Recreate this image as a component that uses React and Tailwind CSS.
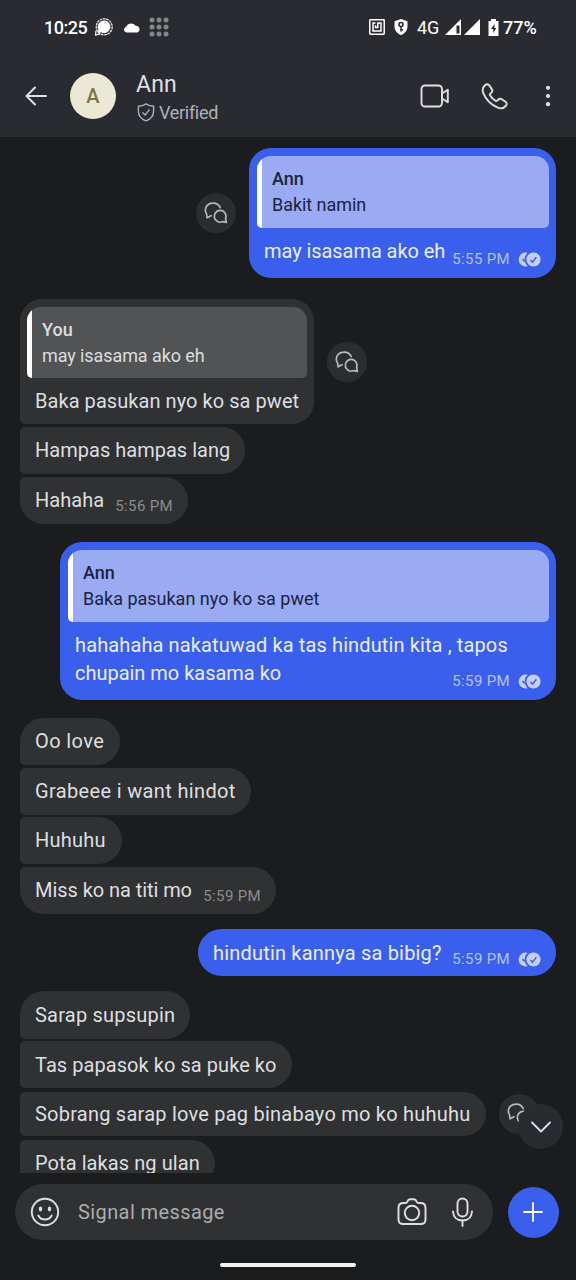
import React from 'react';
import clsx from 'clsx';

const messages = [
    {
        out: true,
        gap: 'mt-[11px]',
        box: 'w-[307px] h-[130px] rounded-[22px]',
        quote: { name: 'Ann', text: 'Bakit namin', track: 'tracking-[-0.05px]' },
        lines: [{ text: 'may isasama ako eh', track: 'tracking-[-0.06px]' }],
        time: '5:55 PM',
        thread: true,
    },
    {
        gap: 'mt-[21px]',
        box: 'w-[294px] h-[125px] rounded-[22px] rounded-bl-[5px]',
        quote: { name: 'You', text: 'may isasama ako eh', track: 'tracking-[-0.09px]' },
        lines: [{ text: 'Baka pasukan nyo ko sa pwet', track: 'tracking-[0.06px]' }],
        thread: true,
    },
    {
        gap: 'mt-[3px]',
        box: 'w-[225px] h-[47px] rounded-l-[5px] rounded-r-[24px]',
        lines: [{ text: 'Hampas hampas lang', track: 'tracking-[0.02px]' }],
    },
    {
        gap: 'mt-[3px]',
        box: 'w-[168px] h-[47px] rounded-[24px] rounded-tl-[5px]',
        lines: [{ text: 'Hahaha', track: 'tracking-[0.05px]' }],
        time: '5:56 PM',
    },
    {
        out: true,
        gap: 'mt-[18px]',
        box: 'w-[496px] h-[158px] rounded-[22px]',
        quote: { name: 'Ann', text: 'Baka pasukan nyo ko sa pwet', track: 'tracking-normal' },
        lines: [
            { text: 'hahahaha nakatuwad ka tas hindutin kita , tapos', track: 'tracking-[0.12px]' },
            { text: 'chupain mo kasama ko', track: 'tracking-[-0.02px]' },
        ],
        time: '5:59 PM',
    },
    {
        gap: 'mt-[18px]',
        box: 'w-[100px] h-[47px] rounded-[24px] rounded-bl-[5px]',
        lines: [{ text: 'Oo love', track: 'tracking-[0.4px]' }],
    },
    {
        gap: 'mt-[3px]',
        box: 'w-[231px] h-[47px] rounded-l-[5px] rounded-r-[24px]',
        lines: [{ text: 'Grabeee i want hindot', track: 'tracking-[0.35px]' }],
    },
    {
        gap: 'mt-[2px]',
        box: 'w-[102px] h-[47px] rounded-l-[5px] rounded-r-[24px]',
        lines: [{ text: 'Huhuhu', track: 'tracking-[0.25px]' }],
    },
    {
        gap: 'mt-[3px]',
        box: 'w-[256px] h-[47px] rounded-[24px] rounded-tl-[5px]',
        lines: [{ text: 'Miss ko na titi mo', track: 'tracking-[-0.06px]' }],
        time: '5:59 PM',
    },
    {
        out: true,
        gap: 'mt-[15px]',
        box: 'w-[358px] h-[47px] rounded-[24px]',
        lines: [{ text: 'hindutin kannya sa bibig?', track: 'tracking-[0.19px]' }],
        time: '5:59 PM',
    },
    {
        gap: 'mt-[15px]',
        box: 'w-[170px] h-[48px] rounded-[24px] rounded-bl-[5px]',
        lines: [{ text: 'Sarap supsupin', track: 'tracking-[0.22px]' }],
        pad: 'pt-[10px]',
    },
    {
        gap: 'mt-[2px]',
        box: 'w-[272px] h-[47px] rounded-l-[5px] rounded-r-[24px]',
        lines: [{ text: 'Tas papasok ko sa puke ko', track: 'tracking-[0.06px]' }],
        pad: 'pt-[10px]',
    },
    {
        gap: 'mt-[4px]',
        box: 'w-[466px] h-[44px] rounded-l-[5px] rounded-r-[22px]',
        lines: [{ text: 'Sobrang sarap love pag binabayo mo ko huhuhu', track: 'tracking-[0.23px]' }],
        thread: true,
        pad: 'pt-[8px]',
    },
    {
        gap: 'mt-[4px]',
        box: 'w-[195px] h-[47px] rounded-l-[5px] rounded-r-[24px]',
        lines: [{ text: 'Pota lakas ng ulan', track: 'tracking-[0.08px]' }],
    },
];

const ThreadButton = () => (
    <div className="flex h-10 w-10 shrink-0 items-center justify-center rounded-full bg-[#2c2d2f]">
        <svg className="h-[22px] w-6" viewBox="0 0 24 22" fill="none" stroke="#b9babd" strokeWidth="1.7" strokeLinecap="round" strokeLinejoin="round">
            <path d="M16.200 5.500A7.700 7.700 0 0 0 8.800 1.200C4.600 1.200 1.300 4.300 1.300 8.200c0 1.500.5 2.700 1.300 3.800l.5 3.800L7 13.700" />
            <path d="M21.600 16.600l.7 3.700-3.500-.7a5.900 5.900 0 1 1 2.800-3z" />
        </svg>
    </div>
);

const ReadChecks = () => (
    <svg className="h-[15px] w-[23px]" viewBox="0 0 23 15">
        <path d="M9.600.8a7 7 0 1 0 0 13.400 9 9 0 0 1 0-13.400z" fill="#c3cefa" />
        <path d="M4.500 7l2 2.500" stroke="#3b5fed" strokeWidth="1.500" />
        <circle cx="15.500" cy="7.500" r="7.100" fill="#c3cefa" />
        <path d="M12.400 7.900l2.100 2.300 3.900-5" fill="none" stroke="#3b5fed" strokeWidth="1.500" />
    </svg>
);

const Quote = ({ quote, out }) => (
    <div
        className={clsx(
            'mt-2 mr-[7px] flex shrink-0 overflow-hidden rounded-t-[14px] rounded-b-[5px] text-[18px]',
            out ? 'ml-2 h-[72px] bg-[#9aabf3] text-[#1b2340]' : 'ml-[7px] h-[71px] bg-[#525355] text-[#dcdddf]'
        )}
    >
        <div className="w-[5px] bg-white" />
        <div className="pt-[10px] pl-[10px]">
            <div className="leading-[26px] font-medium">{quote.name}</div>
            <div className={clsx('leading-[25px] whitespace-nowrap', quote.track)}>{quote.text}</div>
        </div>
    </div>
);

const Message = ({ msg }) => {
    const pad = msg.pad || (msg.out && !msg.quote ? 'pt-[10px]' : 'pt-[9px]');

    return (
        <div className={clsx('flex items-center gap-[13px]', msg.out && 'flex-row-reverse', msg.gap)}>
            <div
                className={clsx(
                    'relative flex shrink-0 flex-col overflow-hidden',
                    msg.out ? 'bg-[#3b5fed] text-[#e9edfd]' : 'bg-[#303133] text-[#dedfe1]',
                    msg.box
                )}
            >
                {msg.quote && <Quote quote={msg.quote} out={msg.out} />}
                <div className={clsx('pl-[15px] text-[20px] leading-[28px]', pad)}>
                    {msg.lines.map((line) => (
                        <div key={line.text} className={clsx('whitespace-nowrap', line.track)}>
                            {line.text}
                        </div>
                    ))}
                </div>
                {msg.time && (
                    <div
                        className={clsx(
                            'absolute right-[15px] flex items-center gap-2 text-[15px] leading-[18px] tracking-[0.35px]',
                            msg.quote && 'bottom-[10px]',
                            !msg.quote && (msg.out ? 'bottom-[8px]' : 'bottom-[9px]'),
                            msg.out ? 'text-[#b3c1f8]' : 'text-[#8b8c8f]'
                        )}
                    >
                        {msg.time}
                        {msg.out && <ReadChecks />}
                    </div>
                )}
            </div>
            {msg.thread && <ThreadButton />}
        </div>
    );
};

const StatusBar = () => (
    <div className="flex h-[54px] items-center pl-[44px] text-[18px] font-medium text-white">
        <span className="w-[51px] tracking-[-0.5px]">10:25</span>
        <svg className="h-[18px] w-[18px]" viewBox="0 0 18 18">
            <circle cx="9.200" cy="8.800" r="8" fill="none" stroke="#fff" strokeWidth="1.200" strokeDasharray="2.500 .8" />
            <path d="M9.200 2.600a6.200 6.200 0 1 1-3 11.600l-3.800 1.400 1-3.900a6.200 6.200 0 0 1 5.800-9.100z" fill="#fff" />
            <path d="M1 12.500L.6 17l4.500-.8" fill="none" stroke="#fff" strokeWidth="1.200" />
        </svg>
        <svg className="ml-[10px] h-[11px] w-[18px]" viewBox="0 0 18 11" fill="#fff">
            <path d="M3.400 10.500A3 3 0 0 1 3 4.700 5.500 5.500 0 0 1 12.600 3.800 3.500 3.500 0 0 1 14.400 10.500z" />
        </svg>
        <svg className="ml-[8px] h-[20px] w-[20px]" viewBox="0 0 20 20" fill="#85868a">
            {[3, 10, 17].map((y) => [3, 10, 17].map((x) => <circle key={`${x}-${y}`} cx={x} cy={y} r="2.500" />))}
        </svg>
        <svg className="ml-[200px] h-[16px] w-[16px]" viewBox="0 0 16 16" fill="none" stroke="#fff" strokeWidth="1.500">
            <rect x=".8" y=".8" width="14.400" height="14.400" rx=".6" />
            <path d="M6.500 4H4v8h8V4H8.800v4.500H6.500V6.200" />
        </svg>
        <svg className="ml-[9px] h-[16px] w-[14px]" viewBox="0 0 14 16">
            <path d="M7 0l6.500 2.300v5.200c0 3.800-2.700 7.200-6.500 8.500C3.200 14.700.5 11.300.5 7.500V2.300z" fill="#fff" />
            <circle cx="7" cy="5.600" r="2" fill="none" stroke="#2a2b30" strokeWidth="1.500" />
            <path d="M7 8v4.500M7 10.800h2" stroke="#2a2b30" strokeWidth="1.500" />
        </svg>
        <span className="ml-[9px] w-[28px] font-normal">4G</span>
        <svg className="h-[16px] w-[16px]" viewBox="0 0 16 16">
            <path d="M16 0v16H0z" fill="#fff" />
            <path d="M11.500 6.500h3v8h-3z" fill="#2a2b30" />
        </svg>
        <svg className="ml-[3px] h-[16px] w-[16px]" viewBox="0 0 16 16" fill="#fff">
            <path d="M16 0v16H0z" />
        </svg>
        <svg className="ml-[8px] h-[17px] w-[11px]" viewBox="0 0 11 17">
            <path d="M3 0h5v2h2.500v15H.5V2H3z" fill="#fff" />
            <path d="M6.500 5L3 10h2.300v4L8.300 9H6.500z" fill="#2a2b30" />
        </svg>
        <span className="ml-[4px]">77%</span>
    </div>
);

const Header = () => (
    <div className="flex h-[84px] items-center pl-[25px]">
        <svg className="h-[20px] w-[22px]" viewBox="0 0 22 20" fill="none" stroke="#dfe0e4" strokeWidth="2" strokeLinecap="round" strokeLinejoin="round">
            <path d="M21 10H1.500M10 1.500L1.500 10l8.500 8.500" />
        </svg>
        <div className="ml-[23px] flex h-[46px] w-[46px] items-center justify-center rounded-full bg-[#ebe8d6] text-[20px] font-medium text-[#7a7448]">
            A
        </div>
        <div className="ml-[20px] w-[284px] pt-[5px] text-[#dfe0e4]">
            <div className="text-[23px] leading-[28px] tracking-[0.2px]">Ann</div>
            <div className="flex items-center gap-[4px] text-[18px] leading-[27px] tracking-[-0.3px] text-[#b0b1b6]">
                <svg className="h-[19px] w-[19px]" viewBox="0 0 19 19" fill="none" stroke="#b0b1b6" strokeWidth="1.400" strokeLinecap="round" strokeLinejoin="round">
                    <path d="M10 .9c2.200 1.600 4.700 2.300 7.600 2.400v5c0 4.300-3.200 8-7.600 9.600-4.400-1.600-7.600-5.300-7.600-9.600v-5C5.300 3.200 7.800 2.500 10 .9z" />
                    <path d="M6.800 9.700l2.300 2.400 4-5.300" />
                </svg>
                Verified
            </div>
        </div>
        <svg className="h-[24px] w-[30px]" viewBox="0 0 30 24" fill="none" stroke="#dfe0e4" strokeWidth="1.900" strokeLinejoin="round">
            <rect x="1.500" y="1.500" width="20.500" height="21" rx="3.500" />
            <path d="M22 9.500l5.800-3.700v12.400L22 14.500" />
        </svg>
        <svg className="ml-[31px] h-[27px] w-[27px]" viewBox="0 0 27 27" fill="none" stroke="#dfe0e4" strokeWidth="1.900" strokeLinejoin="round">
            <path d="M4 2.200c1.400-1.300 3.300-1.200 4.300.2l2.500 3.700c.8 1.200.6 2.500-.4 3.500l-1.200 1.100c-.5.500-.5 1 0 1.700 1.200 2 3.200 4 5.300 5.400.7.500 1.200.4 1.700-.1l1.200-1.200c1-1 2.200-1.100 3.400-.3l3.700 2.500c1.500 1.100 1.600 2.900.2 4.300-2.100 2.400-4.600 3-7.800 1.700C10.200 21.800 4.800 16.400 2.200 9.800 1 6.600 1.600 4.300 4 2.200z" />
        </svg>
        <svg className="ml-[37px] h-[22px] w-[6px]" viewBox="0 0 6 22" fill="#dfe0e4">
            <circle cx="3" cy="2.800" r="2.100" />
            <circle cx="3" cy="11" r="2.100" />
            <circle cx="3" cy="19.200" r="2.100" />
        </svg>
    </div>
);

const Composer = () => (
    <div className="flex items-center pt-[11px] pl-[15px]">
        <div className="flex h-[56px] w-[478px] items-center rounded-full bg-[#303133] pl-[15px]">
            <svg className="h-[30px] w-[30px]" viewBox="0 0 30 30" fill="none" stroke="#dfe0e2" strokeWidth="1.900" strokeLinecap="round">
                <circle cx="15" cy="15" r="13.200" />
                <path d="M8.300 18.500c1.400 2.600 3.700 4 6.700 4s5.300-1.400 6.700-4" />
                <ellipse cx="10.500" cy="12" rx="1.700" ry="2.400" fill="#dfe0e2" stroke="none" />
                <ellipse cx="19.500" cy="12" rx="1.700" ry="2.400" fill="#dfe0e2" stroke="none" />
            </svg>
            <span className="ml-[18px] w-[319px] text-[20px] tracking-[0.4px] text-[#acadb0]">Signal message</span>
            <svg className="h-[28px] w-[30px]" viewBox="0 0 30 28" fill="none" stroke="#dfe0e2" strokeWidth="1.900" strokeLinejoin="round">
                <path d="M6.300 5h2.200c.9 0 1.300-.4 1.700-1.200.8-1.800 1.300-2.500 2.800-2.500h4c1.500 0 2 .7 2.800 2.500.4.8.8 1.200 1.700 1.200h2.200c3 0 4.800 1.800 4.800 4.800v11.400c0 3-1.800 4.800-4.800 4.800H6.300c-3 0-4.800-1.800-4.800-4.800V9.800C1.500 6.800 3.300 5 6.300 5z" />
                <circle cx="15" cy="15" r="7.200" />
            </svg>
            <svg className="ml-[25px] h-[30px] w-[21px]" viewBox="0 0 21 30" fill="none" stroke="#dfe0e2" strokeWidth="1.900" strokeLinecap="round">
                <rect x="5.500" y="1.500" width="10" height="18" rx="5" />
                <path d="M1 14.500c.3 5.500 4 9 9.500 9s9.200-3.500 9.500-9M10.500 23.500V29" />
            </svg>
        </div>
        <div className="ml-[15px] flex h-[51px] w-[51px] items-center justify-center rounded-full bg-[#3b5fed] pr-px">
            <svg className="h-5 w-5" viewBox="0 0 20 20" stroke="#fff" strokeWidth="1.800" strokeLinecap="round">
                <path d="M10 1v18M1 10h18" />
            </svg>
        </div>
    </div>
);

export default function App() {
    return (
        <div className="flex h-[1280px] w-[576px] flex-col overflow-hidden bg-[#1b1c1e] font-[Roboto,sans-serif]">
            <div className="h-[137px] shrink-0 bg-[#2a2b30]">
                <StatusBar />
                <Header />
            </div>
            <div className="relative h-[1036px] shrink-0 overflow-hidden pr-5 pl-5">
                {messages.map((msg) => (
                    <Message key={msg.lines[0].text} msg={msg} />
                ))}
                {/* Scroll to bottom */}
                <div className="absolute right-[13px] bottom-[24px] flex h-[45px] w-[45px] items-center justify-center rounded-full bg-[#2a2b30]">
                    <svg className="h-3 w-5" viewBox="0 0 20 12" fill="none" stroke="#dfe0e4" strokeWidth="1.800" strokeLinecap="round" strokeLinejoin="round">
                        <path d="M1 1.500l9 9 9-9" />
                    </svg>
                </div>
            </div>
            <Composer />
            <div className="mx-auto mt-[23px] h-[4px] w-[136px] rounded-full bg-[#f1f1f1]" />
        </div>
    );
}
